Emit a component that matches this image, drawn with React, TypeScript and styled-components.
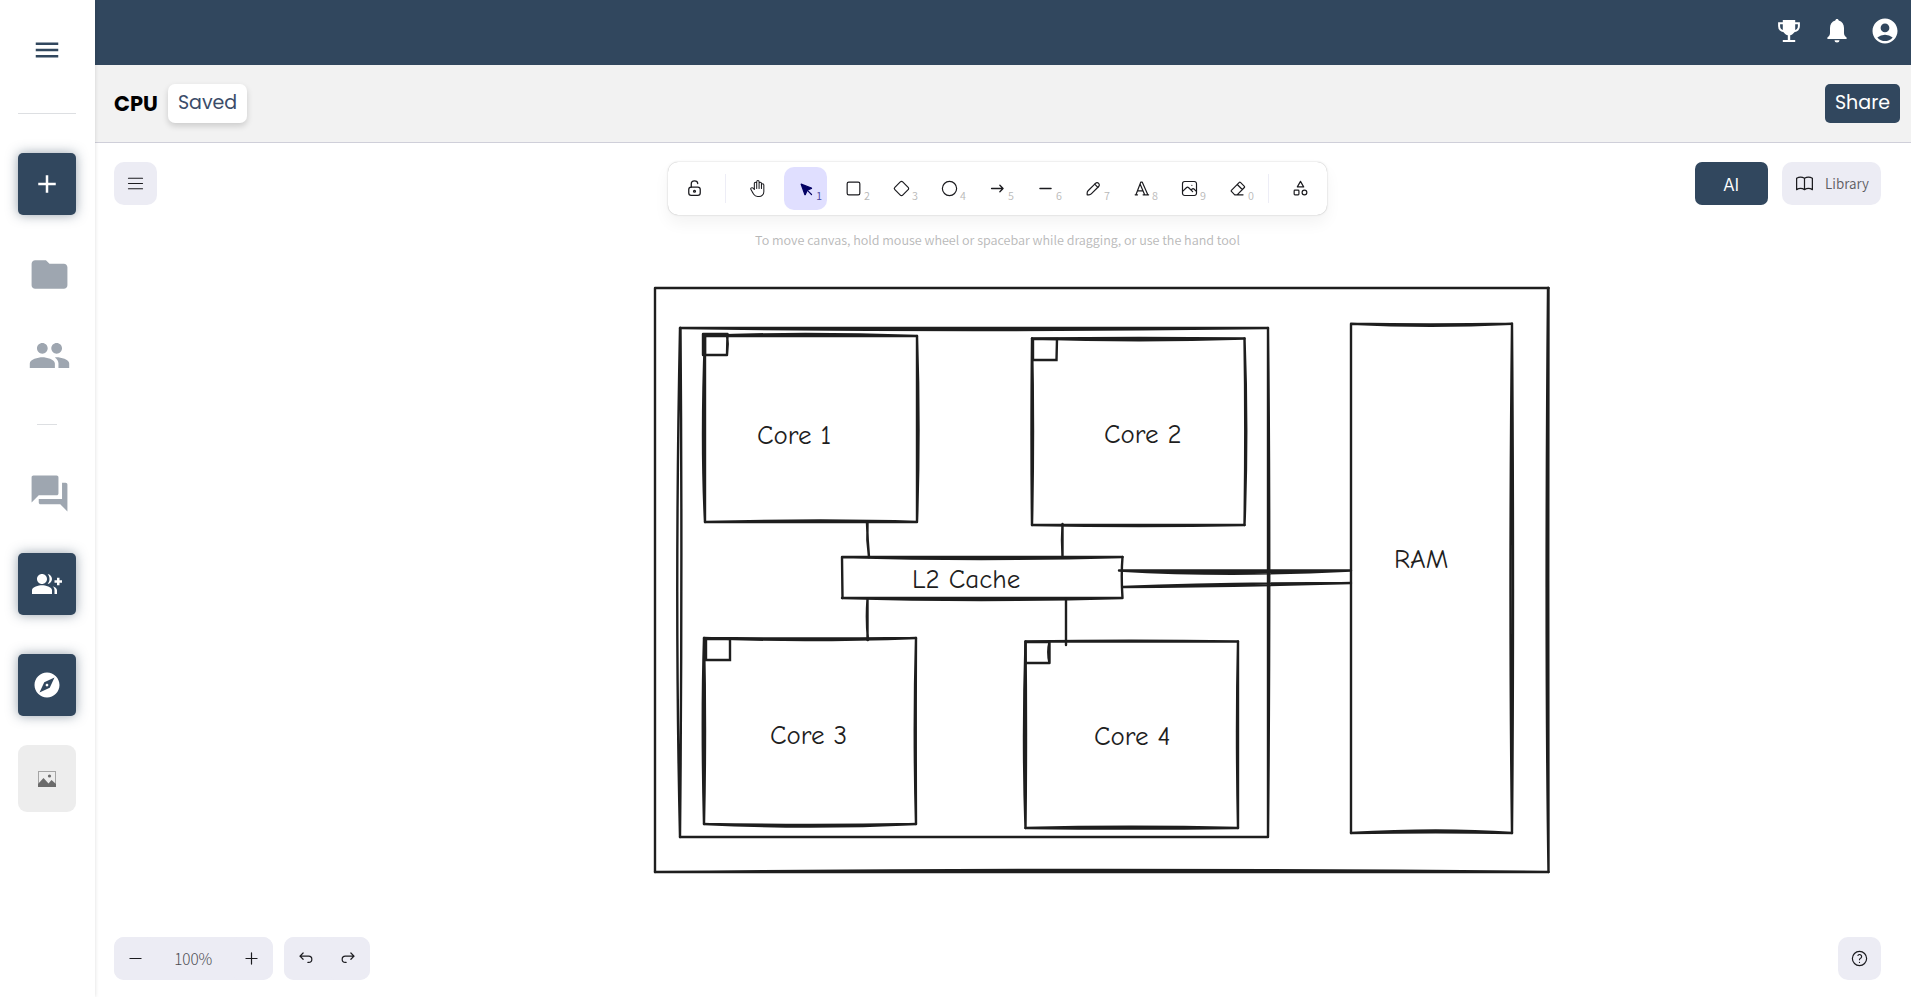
import React from 'react';
import styled, { createGlobalStyle, css } from 'styled-components';
import {
  MdMenu,
  MdAdd,
  MdFolder,
  MdPeople,
  MdForum,
  MdGroupAdd,
  MdExplore,
  MdAccountCircle,
} from 'react-icons/md';

const navy = '#31475e';
const uiFont = 'Assistant, "Noto Sans CJK JP", "Noto Sans", sans-serif';
const brandFont = 'Poppins, Inter, sans-serif';

const GlobalStyle = createGlobalStyle`
  *, *::before, *::after { box-sizing: border-box; }
  body { margin: 0; background: #ffffff; font-family: ${uiFont}; }
  button { border: 0; margin: 0; padding: 0; background: none; font: inherit; color: inherit; cursor: pointer; }
  svg { display: block; flex: none; }
`;

const Page = styled.div`
  display: flex;
  min-height: 100vh;
`;

const Sidebar = styled.nav`
  display: flex;
  flex-direction: column;
  align-items: center;
  flex: none;
  width: 95px;
  padding: 35px 19px 0 18px;
  background: #ffffff;
  box-shadow: 0 0 4px rgba(0, 0, 0, 0.14);
  z-index: 1;
`;

const MenuToggle = styled.button`
  color: ${navy};
`;

const Divider = styled.hr<{ $short?: boolean }>`
  width: ${(p) => (p.$short ? '20px' : '58px')};
  height: 1px;
  margin: ${(p) => (p.$short ? '47px 0 9px' : '48px 0 39px')};
  border: 0;
  background: #dddfe2;
`;

const NavTile = styled.button`
  display: flex;
  align-items: center;
  justify-content: center;
  width: 58px;
  height: 62px;
  border-radius: 5px;
  background: ${navy};
  color: #ffffff;
  box-shadow: 0 0 12px rgba(49, 71, 94, 0.5);

  & + & {
    margin-top: 39px;
  }
`;

const NavLink = styled.a`
  display: flex;
  align-items: center;
  justify-content: center;
  width: 62px;
  height: 43px;
  margin: 38px 0 0 4px;
  color: #9ea6b0;
`;

const PictureTile = styled.button`
  display: flex;
  align-items: center;
  justify-content: center;
  width: 58px;
  height: 67px;
  margin-top: 29px;
  border-radius: 9px;
  background: #ededed;
  color: #6b6b6b;
`;

const NavGroup = styled.div`
  display: flex;
  flex-direction: column;
  align-items: center;
  padding-bottom: 38px;
`;

const Main = styled.main`
  display: flex;
  flex-direction: column;
  flex: 1;
  min-width: 0;
`;

const TopBar = styled.header`
  display: flex;
  align-items: center;
  justify-content: flex-end;
  gap: 18px;
  height: 65px;
  padding: 0 11px 3px 0;
  background: ${navy};
  color: #ffffff;
`;

const TopButton = styled.button`
  display: flex;
  align-items: center;
  justify-content: center;
  width: 30px;
  height: 30px;
`;

const TitleBar = styled.div`
  display: flex;
  align-items: center;
  gap: 10px;
  height: 78px;
  padding: 0 11px 0 19px;
  border-bottom: 1px solid #cfcfd9;
  background: #f2f2f2;
  font-family: ${brandFont};
  font-size: 19px;
  line-height: 24px;
`;

const Title = styled.h1`
  margin: 0;
  color: #000000;
  font-size: 21px;
  font-weight: 700;
`;

const TitleButton = styled.button<{ $primary?: boolean }>`
  height: 39px;
  padding: 0 10px 2px;
  border-radius: 7px;
  background: #ffffff;
  color: #3b4c69;
  box-shadow: 0 3px 6px rgba(0, 0, 0, 0.16);
  ${(p) =>
    p.$primary &&
    css`
      margin-left: auto;
      border-radius: 5px;
      background: ${navy};
      color: #ffffff;
      box-shadow: none;
    `}
`;

const Board = styled.section`
  position: relative;
  display: flex;
  flex-direction: column;
  justify-content: space-between;
  flex: 1;
  padding: 19px 30px 17px 19px;
  overflow: hidden;
`;

const Scene = styled.svg`
  position: absolute;
  inset: 0;
  width: 100%;
  height: 100%;
`;

const TopTools = styled.div`
  position: relative;
  display: grid;
  grid-template-columns: 1fr auto 1fr;
  align-items: start;
`;

const SoftButton = styled.button`
  display: flex;
  align-items: center;
  justify-content: center;
  width: 43px;
  height: 43px;
  border-radius: 10px;
  background: #ececf4;
  color: #1b1b1f;
`;

const Center = styled.div`
  display: flex;
  flex-direction: column;
  align-items: center;
  gap: 13px;
`;

const Toolbar = styled.div`
  display: flex;
  align-items: center;
  gap: 5px;
  padding: 5px;
  border-radius: 10px;
  background: #ffffff;
  box-shadow: 0 0 1px rgba(0, 0, 0, 0.3), 0 0 3px rgba(0, 0, 0, 0.08), 0 8px 16px rgba(0, 0, 0, 0.05);
`;

const ToolButton = styled.button<{ $active?: boolean }>`
  position: relative;
  display: flex;
  align-items: center;
  justify-content: center;
  width: 43px;
  height: 43px;
  border-radius: 10px;
  background: ${(p) => (p.$active ? '#e0dfff' : 'transparent')};
  color: ${(p) => (p.$active ? '#030064' : '#1b1b1f')};
`;

const KeyHint = styled.span<{ $active?: boolean }>`
  position: absolute;
  right: 5px;
  bottom: 7px;
  color: ${(p) => (p.$active ? '#4a479c' : '#b8b8b8')};
  font-size: 12px;
  line-height: 14px;
`;

const ToolDivider = styled.span`
  width: 1px;
  height: 29px;
  margin: 0 5px 0 4px;
  background: #ededf6;
`;

const Hint = styled.p`
  margin: 0;
  color: #b8b8b8;
  font-size: 14px;
  line-height: 24px;
`;

const RightTools = styled.div`
  display: flex;
  justify-content: flex-end;
  gap: 14px;
`;

const AiButton = styled.button`
  width: 73px;
  height: 43px;
  border-radius: 7px;
  background: ${navy};
  color: #ffffff;
  font-size: 20px;
`;

const LibraryButton = styled(SoftButton)`
  gap: 10px;
  width: 99px;
  color: #5b5b60;
  font-size: 15px;

  svg {
    color: #1b1b1f;
  }
`;

const BottomTools = styled.div`
  position: relative;
  display: flex;
  gap: 11px;

  > :last-child {
    margin-left: auto;
  }
`;

const SoftGroup = styled.div`
  display: flex;
  border-radius: 10px;
  background: #ececf4;
`;

const ZoomValue = styled.button`
  width: 73px;
  color: #4b4b50;
  font-size: 17px;
  font-weight: 300;
`;

type IconProps = { children: React.ReactNode; box?: number; size?: number; stroke?: number };

const Icon = ({ children, box = 24, size = 19, stroke = 1.5 }: IconProps) => (
  <svg
    width={size}
    height={size}
    viewBox={`0 0 ${box} ${box}`}
    fill="none"
    stroke="currentColor"
    strokeWidth={stroke}
    strokeLinecap="round"
    strokeLinejoin="round"
    aria-hidden="true"
  >
    {children}
  </svg>
);

const TrophyIcon = () => (
  <svg width="22" height="22" viewBox="0 0 22 22" fill="currentColor" aria-hidden="true">
    <path d="M4.800 0h12.400v9c0 3.200-2.200 5.600-5 6.200V20h5v2H4.800v-2h5v-4.800c-2.800-.6-5-3-5-6.200z" />
    <path d="M5 3.200H1.100V6c0 2.900 1.900 4.900 4.900 5.200M17 3.200h3.900V6c0 2.900-1.900 4.900-4.900 5.200" fill="none" stroke="currentColor" strokeWidth="2" />
  </svg>
);

const BellIcon = () => (
  <svg width="20" height="24" viewBox="0 0 20 24" fill="currentColor" aria-hidden="true">
    <path d="M10 0c1 0 1.600.6 1.700 1.500C15.200 2.400 17 5.300 17 9v5c0 2 .8 3.200 2.600 4.600V20H.4v-1.400C2.200 17.200 3 16 3 14V9c0-3.700 1.800-6.600 5.300-7.500C8.400.6 9 0 10 0z" />
    <path d="M7.500 21.300h5a2.500 2.300 0 0 1-5 0z" />
  </svg>
);

const LockIcon = () => (
  <Icon box={20} stroke={1.35}>
    <path d="M13.542 8.542H6.458a2.5 2.5 0 0 0-2.5 2.5v3.75a2.5 2.5 0 0 0 2.5 2.5h7.084a2.5 2.5 0 0 0 2.5-2.5v-3.75a2.5 2.5 0 0 0-2.5-2.5Z" />
    <circle cx="10" cy="12.9" r="1" />
    <path d="M6.6 8.5V5.3c0-2 1.5-3.3 3.4-3.3 1.9 0 3.3 1.2 3.4 2.8" />
  </Icon>
);

const tools: { name: string; hint?: string; icon: React.ReactNode }[] = [
  {
    name: 'Hand',
    icon: (
      <Icon stroke={1.3}>
        <path d="M8 13V5.500a1.500 1.500 0 0 1 3 0V12M11 5.500v-2a1.500 1.500 0 1 1 3 0V12M14 5.500a1.500 1.500 0 0 1 3 0V12" />
        <path d="M17 7.500a1.500 1.500 0 0 1 3 0V16a6 6 0 0 1-6 6h-2h.208a6 6 0 0 1-5.012-2.700L7 19c-.312-.479-1.407-2.388-3.286-5.728a1.500 1.500 0 0 1 .536-2.022a1.867 1.867 0 0 1 2.280.280L8 13" />
      </Icon>
    ),
  },
  {
    name: 'Selection',
    hint: '1',
    icon: (
      <Icon box={22} stroke={1.4}>
        <g fill="currentColor">
          <path d="M6 6l4.153 11.793a.365.365 0 0 0 .331.207a.366.366 0 0 0 .332-.207L13 13l4.787-1.994a.355.355 0 0 0 .213-.323a.355.355 0 0 0-.213-.323L6 6z" />
          <path d="M13.500 13.500l4.500 4.500" />
        </g>
      </Icon>
    ),
  },
  { name: 'Rectangle', hint: '2', icon: <Icon><rect x="4" y="4" width="16" height="16" rx="2" /></Icon> },
  {
    name: 'Diamond',
    hint: '3',
    icon: (
      <Icon>
        <path d="M10.500 20.400l-6.900-6.900c-.781-.781-.781-2.219 0-3l6.900-6.900c.781-.781 2.219-.781 3 0l6.900 6.900c.781.781.781 2.219 0 3l-6.900 6.900c-.781.781-2.219.781-3 0z" />
      </Icon>
    ),
  },
  { name: 'Ellipse', hint: '4', icon: <Icon><circle cx="12" cy="12" r="9" /></Icon> },
  { name: 'Arrow', hint: '5', icon: <Icon stroke={1.7}><path d="M4.500 12H19M15 16l4-4M15 8l4 4" /></Icon> },
  { name: 'Line', hint: '6', icon: <Icon box={20}><path d="M4.167 10h11.666" /></Icon> },
  {
    name: 'Draw',
    hint: '7',
    icon: (
      <Icon box={20} stroke={1.25}>
        <path d="m7.643 15.690 7.774-7.773a2.357 2.357 0 1 0-3.334-3.334L4.310 12.357a3.333 3.333 0 0 0-.977 2.357v1.953h1.953c.884 0 1.732-.352 2.357-.977Z" />
        <path d="m11.250 5.417 3.333 3.333" />
      </Icon>
    ),
  },
  {
    name: 'Text',
    hint: '8',
    icon: (
      <Icon>
        <path d="M4 20h3M14 20h7M6.900 15h6.900M10.200 6.300L16 20M5 20L11 4h2l7 16" />
      </Icon>
    ),
  },
  {
    name: 'Insert image',
    hint: '9',
    icon: (
      <Icon box={20} stroke={1.25}>
        <path d="M12.500 6.667h.01M4.910 2.625h10.180a2.284 2.284 0 0 1 2.285 2.284v10.182a2.284 2.284 0 0 1-2.284 2.284H4.909a2.284 2.284 0 0 1-2.284-2.284V4.909a2.284 2.284 0 0 1 2.284-2.284Z" />
        <path d="m3.333 12.500 3.334-3.333c.773-.745 1.726-.745 2.500 0l4.166 4.166M11.667 11.667l.833-.834c.774-.744 1.726-.744 2.500 0l1.667 1.667" />
      </Icon>
    ),
  },
  {
    name: 'Eraser',
    hint: '0',
    icon: (
      <Icon>
        <path d="M19 20H8.500l-4.210-4.300a1 1 0 0 1 0-1.410l10-10a1 1 0 0 1 1.410 0l5 5a1 1 0 0 1 0 1.410L11.500 20M18 13.300L11.700 7" />
      </Icon>
    ),
  },
];

/* Hand-drawn strokes: each side is drawn twice with slightly different bows. */
const strokes = [
  // motherboard outline
  'M655 288H1548.500M655 288V872',
  'M1548.500 288Q1548 580 1548.500 872M1548 288Q1545 640 1548.500 872',
  'M655 872Q1100 868 1548.500 872M655 872Q1100 871 1548.500 872',
  // processor package
  'M680 328H1268M680 328Q974 332 1268 328',
  'M680.500 328Q682.500 580 680 837M680 328Q674.500 600 680 837',
  'M1268 328V837M1268 328Q1270.500 560 1268 837M680 837H1268',
  // core 1
  'M704.500 336H917M704.500 336Q800 332 917 336',
  'M705 336Q705 440 705 522M705 336Q701 440 705 522',
  'M917 336V522M917 336Q920 430 917 522M705 522H917M705 522Q830 519 917 522',
  'M703 334H727.500M703 335.500H727.500M727.500 334L727 355M727 334Q728.500 344 727 355M727 355H703M703 334V355M705 334V355',
  // core 2
  'M1032 338.500Q1140 337.500 1244.500 338.500M1032 338.500Q1140 342 1244.500 338.500',
  'M1032 338.500Q1034 430 1032 525M1032 338.500Q1031 440 1032 525',
  'M1244.500 338.500Q1248 430 1244.500 525M1244.500 338.500Q1246 430 1244.500 525',
  'M1032 525H1244.500M1032 525Q1140 527 1244.500 525',
  'M1033 339H1057L1056.500 360H1033Z',
  // shared cache
  'M842 557H1122.500M842 557Q980 561 1122.500 557M842 557L842.500 598',
  'M1122.500 557Q1121 575 1122.500 598M842 598H1122.500M842 598Q980 602 1122.500 598',
  // core 3
  'M704 638Q800 639 916 638M704 638Q800 642 916 638',
  'M704 638Q706 730 704 824M704 638Q701.500 720 704 824',
  'M916 638Q913.500 730 916 824M916 638Q915.500 720 916 824',
  'M704 824Q810 829 916 824M704 824Q810 826 916 824',
  'M706 639H730V660H706Z',
  // core 4
  'M1025.500 641.500H1238M1025.500 641.500Q1130 640 1238 641.500',
  'M1025.500 641.500Q1026.500 730 1025.500 828M1025.500 641.500Q1022.500 740 1025.500 828',
  'M1238 641.500V828M1238 641.500Q1236 730 1238 828',
  'M1025.500 828H1238M1025.500 828Q1130 825.500 1238 828M1025.500 828Q1130 829 1238 828',
  'M1025.500 642H1049.500M1049.500 642Q1047 652 1049.500 663M1049.500 642V663M1049.500 663H1025.500V642',
  // memory
  'M1351 323.700Q1430 328 1512 323.700M1351 323.700Q1430 325 1512 323.700M1351 323.700V833',
  'M1512 323.700Q1509 600 1512 833M1512 323.700Q1514 600 1512 833',
  'M1351 833Q1440 828 1512 833M1351 833Q1440 831.500 1512 833',
  // connections
  'M867 523Q867.500 540 869 557M867.500 523Q866.500 540 869 557',
  'M1062.500 524V557M1062.500 524Q1061.500 540 1062.500 557',
  'M867.500 599V640M867.500 599Q866 620 868 640M1066 599V645',
  'M1119 570.500H1351M1119 570.500Q1230 577 1351 570.500M1119 570.500Q1230 573.500 1351 570.500',
  'M1123 587Q1230 583 1351 583M1123 587Q1230 586.500 1351 583',
];

const labels = [
  { text: 'Core 1', x: 757, y: 444 },
  { text: 'Core 2', x: 1104, y: 443 },
  { text: 'Core 3', x: 770, y: 744 },
  { text: 'Core 4', x: 1094, y: 745 },
  { text: 'L2 Cache', x: 912, y: 588 },
  { text: 'RAM', x: 1394, y: 568 },
];

const SceneLabel = styled.text`
  fill: #1e1e1e;
  font-family: Virgil, 'Comic Neue', 'Segoe Print', Inter, cursive;
  font-size: 27px;
`;

export default function App() {
  return (
    <Page>
      <GlobalStyle />
      <Sidebar aria-label="Main">
        <MenuToggle aria-label="Open menu"><MdMenu size={30} /></MenuToggle>
        <Divider />
        <NavTile aria-label="New board"><MdAdd size={30} /></NavTile>
        <NavGroup>
          <NavLink href="#files" aria-label="Files"><MdFolder size={43} /></NavLink>
          <NavLink href="#team" aria-label="Team"><MdPeople size={43} /></NavLink>
          <Divider $short />
          <NavLink href="#chat" aria-label="Chat"><MdForum size={43} /></NavLink>
        </NavGroup>
        <NavTile aria-label="Invite people"><MdGroupAdd size={30} /></NavTile>
        <NavTile aria-label="Explore"><MdExplore size={30} /></NavTile>
        <PictureTile aria-label="Picture">
          <svg width="18" height="16" viewBox="0 0 18 16" aria-hidden="true">
            <rect x="0.500" y="0.500" width="17" height="15" fill="none" stroke="#a5a5a5" />
            <path d="M0 16v-3l5.500-6 5 5.500 3-3.500 4.500 4v3z" fill="currentColor" />
            <circle cx="11.500" cy="5" r="1.600" fill="currentColor" />
          </svg>
        </PictureTile>
      </Sidebar>

      <Main>
        <TopBar>
          <TopButton aria-label="Achievements"><TrophyIcon /></TopButton>
          <TopButton aria-label="Notifications"><BellIcon /></TopButton>
          <TopButton aria-label="Account"><MdAccountCircle size={30} /></TopButton>
        </TopBar>
        <TitleBar>
          <Title>CPU</Title>
          <TitleButton>Saved</TitleButton>
          <TitleButton $primary>Share</TitleButton>
        </TitleBar>

        <Board>
          <Scene>
            <g transform="translate(-95 -143)">
              <g fill="none" stroke="#1e1e1e" strokeWidth="2.400" strokeLinecap="round">
                {strokes.map((d) => <path key={d} d={d} />)}
              </g>
              {labels.map((l) => (
                <SceneLabel key={l.text} x={l.x} y={l.y}>{l.text}</SceneLabel>
              ))}
            </g>
          </Scene>

          <TopTools>
            <SoftButton aria-label="Board menu">
              <Icon size={21} stroke={1.4}><path d="M4 6h16M4 12h16M4 18h16" /></Icon>
            </SoftButton>
            <Center>
              <Toolbar role="toolbar" aria-label="Shapes">
                <ToolButton aria-label="Keep tool active"><LockIcon /></ToolButton>
                <ToolDivider />
                {tools.map((t) => (
                  <ToolButton key={t.name} aria-label={t.name} $active={t.hint === '1'}>
                    {t.icon}
                    {t.hint && <KeyHint $active={t.hint === '1'}>{t.hint}</KeyHint>}
                  </ToolButton>
                ))}
                <ToolDivider />
                <ToolButton aria-label="More tools">
                  <Icon>
                    <path d="M12 3l-4 7h8zM4 15a1 1 0 0 1 1-1h4a1 1 0 0 1 1 1v4a1 1 0 0 1-1 1H5a1 1 0 0 1-1-1z" />
                    <circle cx="17" cy="17" r="3" />
                  </Icon>
                </ToolButton>
              </Toolbar>
              <Hint>To move canvas, hold mouse wheel or spacebar while dragging, or use the hand tool</Hint>
            </Center>
            <RightTools>
              <AiButton>AI</AiButton>
              <LibraryButton>
                <Icon size={21} stroke={1.4}>
                  <path d="M3 19a9 9 0 0 1 9 0a9 9 0 0 1 9 0M3 6a9 9 0 0 1 9 0a9 9 0 0 1 9 0M3 6v13M12 6v13M21 6v13" />
                </Icon>
                Library
              </LibraryButton>
            </RightTools>
          </TopTools>

          <BottomTools>
            <SoftGroup>
              <SoftButton aria-label="Zoom out"><Icon box={20} stroke={1.25}><path d="M4.167 10h11.666" /></Icon></SoftButton>
              <ZoomValue>100%</ZoomValue>
              <SoftButton aria-label="Zoom in"><Icon box={20} stroke={1.25}><path d="M10 4.167v11.666M4.167 10h11.666" /></Icon></SoftButton>
            </SoftGroup>
            <SoftGroup>
              <SoftButton aria-label="Undo">
                <Icon box={20} stroke={1.25}><path d="M7.500 10.833 4.167 7.500 7.500 4.167M4.167 7.500h9.166a3.333 3.333 0 0 1 0 6.667H12.500" /></Icon>
              </SoftButton>
              <SoftButton aria-label="Redo">
                <Icon box={20} stroke={1.25}><path d="M12.500 10.833 15.833 7.500 12.500 4.167M15.833 7.500H6.667a3.333 3.333 0 1 0 0 6.667H7.500" /></Icon>
              </SoftButton>
            </SoftGroup>
            <SoftButton aria-label="Help">
              <Icon>
                <circle cx="12" cy="12" r="9" />
                <path d="M12 17v.01M12 13.500a1.500 1.500 0 0 1 1-1.500a2.600 2.600 0 1 0-3-4" />
              </Icon>
            </SoftButton>
          </BottomTools>
        </Board>
      </Main>
    </Page>
  );
}
